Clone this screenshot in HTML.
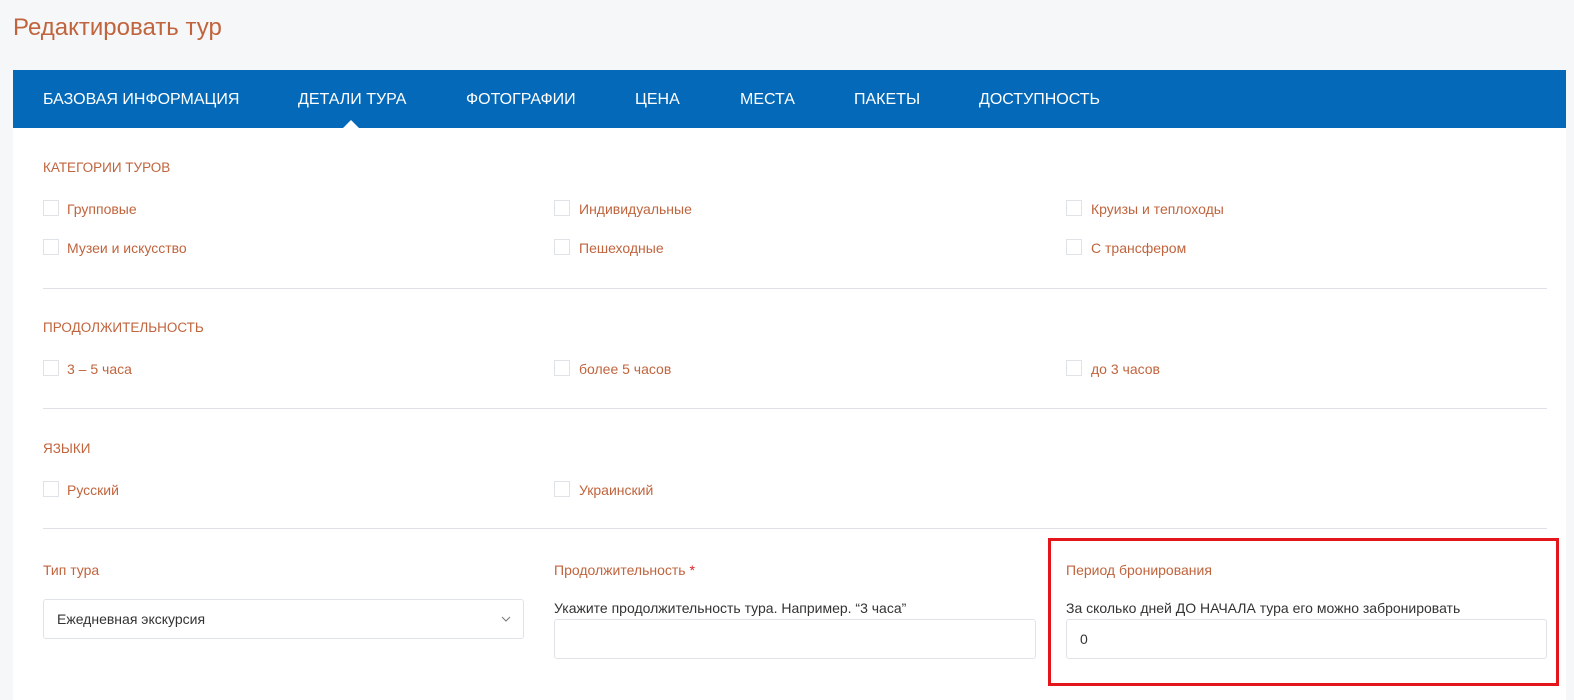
<!DOCTYPE html>
<html><head><meta charset="utf-8"><style>
*{box-sizing:border-box;margin:0;padding:0}
body{width:1574px;height:689px;overflow:hidden;background:#f6f7f9;font-family:"Liberation Sans",sans-serif;position:relative;color:#c0643d}
.abs{position:absolute;white-space:nowrap}
h1{position:absolute;left:13px;top:14px;font-size:24px;font-weight:normal;color:#c0643d}
.card{position:absolute;left:13px;top:70px;width:1553px;height:630px;background:#fff}
.nav{position:absolute;left:13px;top:70px;width:1553px;height:58px;background:#0369b8}
.nav span{position:absolute;top:21px;color:#fff;font-size:16px}
.tri{position:absolute;left:343px;top:120px;width:0;height:0;border-left:8px solid transparent;border-right:8px solid transparent;border-bottom:8px solid #fff}
.h{font-size:13.5px}
.cb{position:absolute;width:16px;height:16px;border:1px solid #dfe3e8;background:#fff}
.lb{font-size:14px}
.hr{position:absolute;left:43px;width:1504px;height:1px;background:#dfe1e6}
.inp{position:absolute;border:1px solid #dfe3e8;border-radius:3px;background:#fff;height:40px}
.g{color:#333;font-size:14px}
</style></head><body>
<h1>Редактировать тур</h1>
<div class="card"></div>
<div class="nav">
<span style="left:30px">БАЗОВАЯ ИНФОРМАЦИЯ</span>
<span style="left:285px">ДЕТАЛИ ТУРА</span>
<span style="left:453px">ФОТОГРАФИИ</span>
<span style="left:622px">ЦЕНА</span>
<span style="left:727px">МЕСТА</span>
<span style="left:841px">ПАКЕТЫ</span>
<span style="left:966px">ДОСТУПНОСТЬ</span>
</div>
<div class="tri"></div>

<div class="abs h" style="left:43px;top:160px">КАТЕГОРИИ ТУРОВ</div>
<div class="cb" style="left:43px;top:200px"></div><div class="abs lb" style="left:67px;top:201px">Групповые</div>
<div class="cb" style="left:554px;top:200px"></div><div class="abs lb" style="left:579px;top:201px">Индивидуальные</div>
<div class="cb" style="left:1066px;top:200px"></div><div class="abs lb" style="left:1091px;top:201px">Круизы и теплоходы</div>
<div class="cb" style="left:43px;top:239px"></div><div class="abs lb" style="left:67px;top:240px">Музеи и искусство</div>
<div class="cb" style="left:554px;top:239px"></div><div class="abs lb" style="left:579px;top:240px">Пешеходные</div>
<div class="cb" style="left:1066px;top:239px"></div><div class="abs lb" style="left:1091px;top:240px">С трансфером</div>
<div class="hr" style="top:288px"></div>

<div class="abs h" style="left:43px;top:320px">ПРОДОЛЖИТЕЛЬНОСТЬ</div>
<div class="cb" style="left:43px;top:360px"></div><div class="abs lb" style="left:67px;top:361px">3 – 5 часа</div>
<div class="cb" style="left:554px;top:360px"></div><div class="abs lb" style="left:579px;top:361px">более 5 часов</div>
<div class="cb" style="left:1066px;top:360px"></div><div class="abs lb" style="left:1091px;top:361px">до 3 часов</div>
<div class="hr" style="top:408px"></div>

<div class="abs h" style="left:43px;top:441px">ЯЗЫКИ</div>
<div class="cb" style="left:43px;top:481px"></div><div class="abs lb" style="left:67px;top:482px">Русский</div>
<div class="cb" style="left:554px;top:481px"></div><div class="abs lb" style="left:579px;top:482px">Украинский</div>
<div class="hr" style="top:528px"></div>

<div class="abs lb" style="left:43px;top:562px">Тип тура</div>
<div class="inp" style="left:43px;top:599px;width:481px"></div>
<div class="abs g" style="left:57px;top:611px">Ежедневная экскурсия</div>
<svg class="abs" style="left:500px;top:614px" width="12" height="10"><path d="M2 3l4 4 4-4" fill="none" stroke="#777" stroke-width="1"/></svg>

<div class="abs lb" style="left:554px;top:562px">Продолжительность <span style="color:#e02020">*</span></div>
<div class="abs g" style="left:554px;top:600px">Укажите продолжительность тура. Например. “3 часа”</div>
<div class="inp" style="left:554px;top:619px;width:482px"></div>

<div class="abs lb" style="left:1066px;top:562px">Период бронирования</div>
<div class="abs g" style="left:1066px;top:600px">За сколько дней ДО НАЧАЛА тура его можно забронировать</div>
<div class="inp" style="left:1066px;top:619px;width:481px"></div>
<div class="abs g" style="left:1080px;top:631px">0</div>
<div style="position:absolute;left:1048px;top:538px;width:511px;height:148px;border:3px solid #e4161c"></div>
</body></html>
